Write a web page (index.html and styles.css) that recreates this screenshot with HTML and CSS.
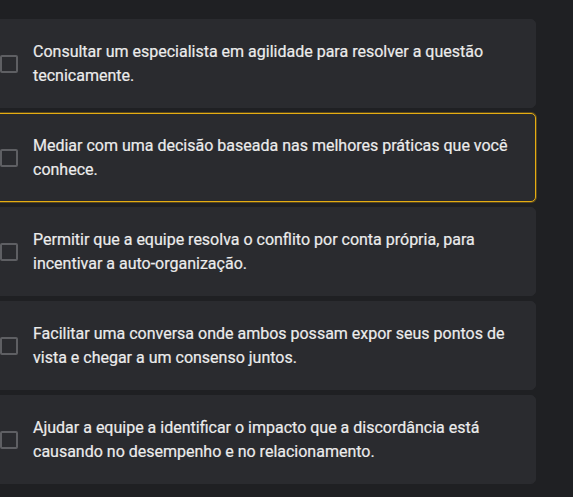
FILE: index.html
```html
<!DOCTYPE html>
<html lang="pt">
<head>
<meta charset="utf-8">
<link rel="stylesheet" href="styles.css">
</head>
<body>
<div class="list">
  <div class="card">
    <span class="box"></span>
    <p class="txt">Consultar um especialista em agilidade para resolver a questão tecnicamente.</p>
  </div>
  <div class="card active">
    <span class="box"></span>
    <p class="txt">Mediar com uma decisão baseada nas melhores práticas que você conhece.</p>
  </div>
  <div class="card">
    <span class="box"></span>
    <p class="txt">Permitir que a equipe resolva o conflito por conta própria, para incentivar a auto-organização.</p>
  </div>
  <div class="card">
    <span class="box"></span>
    <p class="txt">Facilitar uma conversa onde ambos possam expor seus pontos de vista e chegar a um consenso juntos.</p>
  </div>
  <div class="card">
    <span class="box"></span>
    <p class="txt">Ajudar a equipe a identificar o impacto que a discordância está causando no desempenho e no relacionamento.</p>
  </div>
</div>
</body>
</html>
```
FILE: styles.css
```css
html, body {
  margin: 0;
  padding: 0;
  background: #1f2023;
  overflow: hidden;
}
body {
  font-family: Roboto, "Noto Sans", sans-serif;
  color: #ececec;
}
.list {
  display: flex;
  flex-direction: column;
  gap: 5px;
  margin: 19px 0 0 -12px;
  width: 548px;
}
.card {
  box-sizing: border-box;
  height: 89px;
  display: flex;
  align-items: center;
  gap: 15px;
  padding: 0 24px 0 11px;
  background: #2a2b2f;
  border: 1px solid #2a2b2f;
  border-radius: 5px;
}
.card.active {
  border-color: #e5ad12;
  box-shadow: 0 0 0 1px rgba(200, 150, 20, 0.35);
}
.box {
  flex: none;
  box-sizing: border-box;
  width: 18px;
  height: 18px;
  border: 2px solid #5e5f63;
  border-radius: 2px;
}
.txt {
  margin: 0;
  font-size: 16px;
  line-height: 24px;
  -webkit-text-stroke: 0.2px #ececec;
}
```
